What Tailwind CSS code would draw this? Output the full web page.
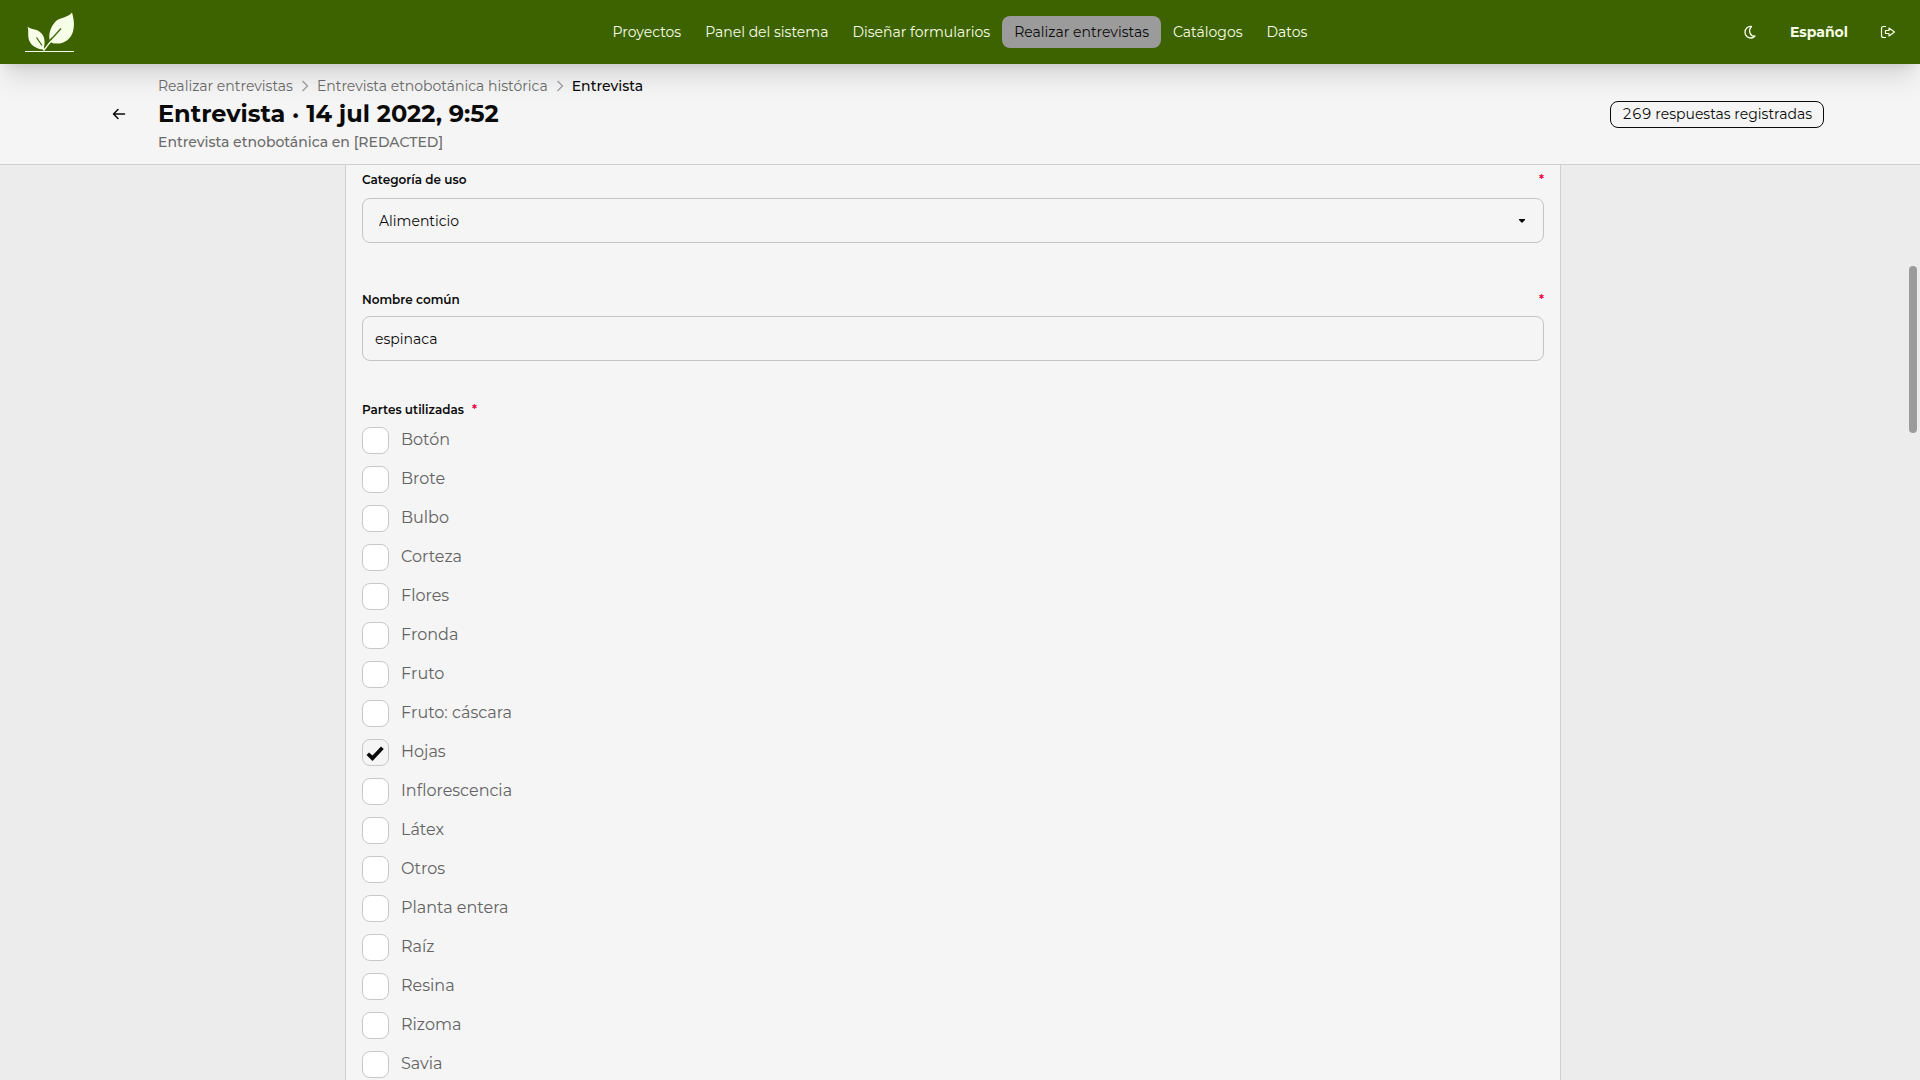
<!DOCTYPE html>
<html lang="es">
<head>
<meta charset="utf-8">
<meta name="viewport" content="width=device-width, initial-scale=1">
<title>Entrevista</title>
<script src="https://cdn.jsdelivr.net/npm/@tailwindcss/browser@4"></script>
</head>
<body class="flex h-screen flex-col overflow-hidden bg-[#ececec] font-[Montserrat,Inter,sans-serif] text-sm text-[#0a0a0a]">

<header class="relative z-20 grid h-16 shrink-0 grid-cols-[1fr_auto_1fr] items-center bg-[#3d6300] pr-6 pl-6 text-[#f7fee7] shadow-xl">
  <a href="#" aria-label="Inicio" class="w-fit">
    <svg class="h-[42px] w-[52px]" viewBox="0 0 52 42" fill="none">
      <path d="M48 1.500C49.500 7 51 13 49 20.500C47 28 40 33.500 31 32.500C28 32.500 26 31 25.500 28C24.500 23 26.500 16 31.500 10.500C36 6 44 7 48 1.500Z" fill="#f7fee7"/>
      <path d="M3.500 15.500C6 18.500 13 17.500 16.500 21.500C21 25 21.500 32 19.500 38.500C13 38 7 35 5 29C3.500 24 5 19 3.500 15.500Z" fill="#f7fee7"/>
      <path d="M37 17.500L22.500 33.500M12.500 26.500L18 34.500" stroke="#3d6300" stroke-width="1.200"/>
      <path d="M27 30L20 39L17.500 35" stroke="#f7fee7" stroke-width="1.300"/>
      <path d="M28 26.500L20.800 36" stroke="#3d6300"/>
      <path d="M1 40.500H50" stroke="#f7fee7"/>
    </svg>
  </a>
  <nav class="flex items-center whitespace-nowrap">
    <a href="#" class="px-3 py-1.5">Proyectos</a>
    <a href="#" class="px-3 py-1.5">Panel del sistema</a>
    <a href="#" class="px-3 py-1.5">Diseñar formularios</a>
    <a href="#" aria-current="page" class="rounded-lg bg-[#9b9b9b] px-3 py-1.5 text-[#0a0a0a]">Realizar entrevistas</a>
    <a href="#" class="px-3 py-1.5">Catálogos</a>
    <a href="#" class="px-3 py-1.5">Datos</a>
  </nav>
  <div class="flex items-center justify-end gap-8">
    <button type="button" aria-label="Cambiar tema">
      <svg class="size-4" viewBox="0 0 16 16" fill="none" stroke="currentColor" stroke-width="1.300" stroke-linejoin="round"><path d="M9.500 2.500C5.500 2 3 5 3 8.200C3 12 6 14 8.800 14C10.500 14 12 13.200 13 12C8 12.500 5.800 6.500 9.500 2.500Z"/></svg>
    </button>
    <button type="button" class="font-bold">Español</button>
    <button type="button" aria-label="Cerrar sesión">
      <svg class="size-4" viewBox="0 0 16 16" fill="none" stroke="currentColor" stroke-width="1.200" stroke-linejoin="round"><path d="M6 2.500H3.500Q1.500 2.500 1.500 4.500V11.500Q1.500 13.500 3.500 13.500H6M5.500 6.500H9V4L14.500 8L9 12V9.500H5.500Z"/></svg>
    </button>
  </div>
</header>

<section class="z-10 flex h-[101px] shrink-0 items-center border-b border-[#d0d0d0] bg-[#f5f5f5] px-24">
  <button type="button" aria-label="Volver" class="flex w-[62px] shrink-0 pl-[15px]">
    <svg class="size-4" viewBox="0 0 16 16" fill="none" stroke="currentColor" stroke-width="1.500" stroke-linecap="round" stroke-linejoin="round"><path d="M13.500 8H3M7 3.500L2.500 8L7 12.500"/></svg>
  </button>
  <div class="flex-1">
    <nav aria-label="Ruta" class="flex h-5 items-center gap-2 text-[#6b6b6b]">
      <a href="#">Realizar entrevistas</a>
      <svg class="h-3 w-2" viewBox="0 0 8 12" fill="none" stroke="#9b9b9b" stroke-width="1.200"><path d="M1.500 1L6.500 6L1.500 11"/></svg>
      <a href="#">Entrevista etnobotánica histórica</a>
      <svg class="h-3 w-2" viewBox="0 0 8 12" fill="none" stroke="#9b9b9b" stroke-width="1.200"><path d="M1.500 1L6.500 6L1.500 11"/></svg>
      <span aria-current="page" class="font-medium text-[#0a0a0a]">Entrevista</span>
    </nav>
    <h1 class="text-2xl leading-9 font-bold">Entrevista · 14 jul 2022, 9:52</h1>
    <p class="font-medium text-[#6b6b6b]">Entrevista etnobotánica en [REDACTED]</p>
  </div>
  <span class="flex h-[27px] items-center rounded-lg border border-[#0a0a0a] px-[11px] tabular-nums">269 respuestas registradas</span>
</section>

<main class="relative min-h-0 flex-1 overflow-hidden pr-[14px]">
  <form class="mx-auto min-h-full w-full max-w-[1216px] border-x border-[#d0d0d0] bg-[#f5f5f5] px-4 pt-1.5">
    <div class="mb-12">
      <div class="flex h-[27px] justify-between text-xs leading-[18px] font-semibold">
        <label for="categoria">Categoría de uso</label><span class="text-[#ec003f]">*</span>
      </div>
      <div class="grid items-center">
        <select id="categoria" class="col-start-1 row-start-1 h-[45px] w-full appearance-none rounded-lg border border-[#c4c4c4] px-4"><option>Alimenticio</option></select>
        <svg class="pointer-events-none col-start-1 row-start-1 mr-[19px] h-1 w-1.5 justify-self-end" viewBox="0 0 6 4"><path d="M0 0H6V1L3 4L0 1Z" fill="#0a0a0a"/></svg>
      </div>
    </div>
    <div class="mb-10">
      <div class="flex h-[25px] justify-between text-xs leading-[18px] font-semibold">
        <label for="nombre">Nombre común</label><span class="text-[#ec003f]">*</span>
      </div>
      <input id="nombre" type="text" value="espinaca" class="h-[45px] w-full rounded-lg border border-[#c4c4c4] px-3">
    </div>
    <fieldset>
      <legend class="flex h-[26px] gap-2 text-xs leading-[18px] font-semibold">Partes utilizadas <span class="text-[#ec003f]">*</span></legend>
      <div id="partes" class="flex flex-col gap-3"></div>
    </fieldset>
  </form>
  <div class="absolute top-[101px] right-[3px] h-[167px] w-2 rounded-full bg-[#9b9b9b]"></div>
</main>

<script>
  const partes = ['Botón','Brote','Bulbo','Corteza','Flores','Fronda','Fruto','Fruto: cáscara','Hojas','Inflorescencia','Látex','Otros','Planta entera','Raíz','Resina','Rizoma','Savia'];
  document.getElementById('partes').innerHTML = partes.map((p, i) => `
    <div class="flex h-[27px] gap-3">
      <span class="grid size-[27px] place-items-center">
        <input id="parte-${i}" type="checkbox" ${p === 'Hojas' ? 'checked' : ''} class="peer col-start-1 row-start-1 size-[27px] appearance-none rounded-lg border border-[#c8c8c8] bg-white checked:bg-[#f5f5f5]">
        <svg class="pointer-events-none invisible col-start-1 row-start-1 size-[27px] peer-checked:visible" viewBox="0 0 27 27" fill="#0a0a0a"><path d="M4.500 16L7 13.500L10.500 16.500L19 7.500L21.800 10L10.500 22Z"/></svg>
      </span>
      <label for="parte-${i}" class="text-base leading-[26px] text-[#636363]">${p}</label>
    </div>`).join('');
</script>
</body>
</html>
